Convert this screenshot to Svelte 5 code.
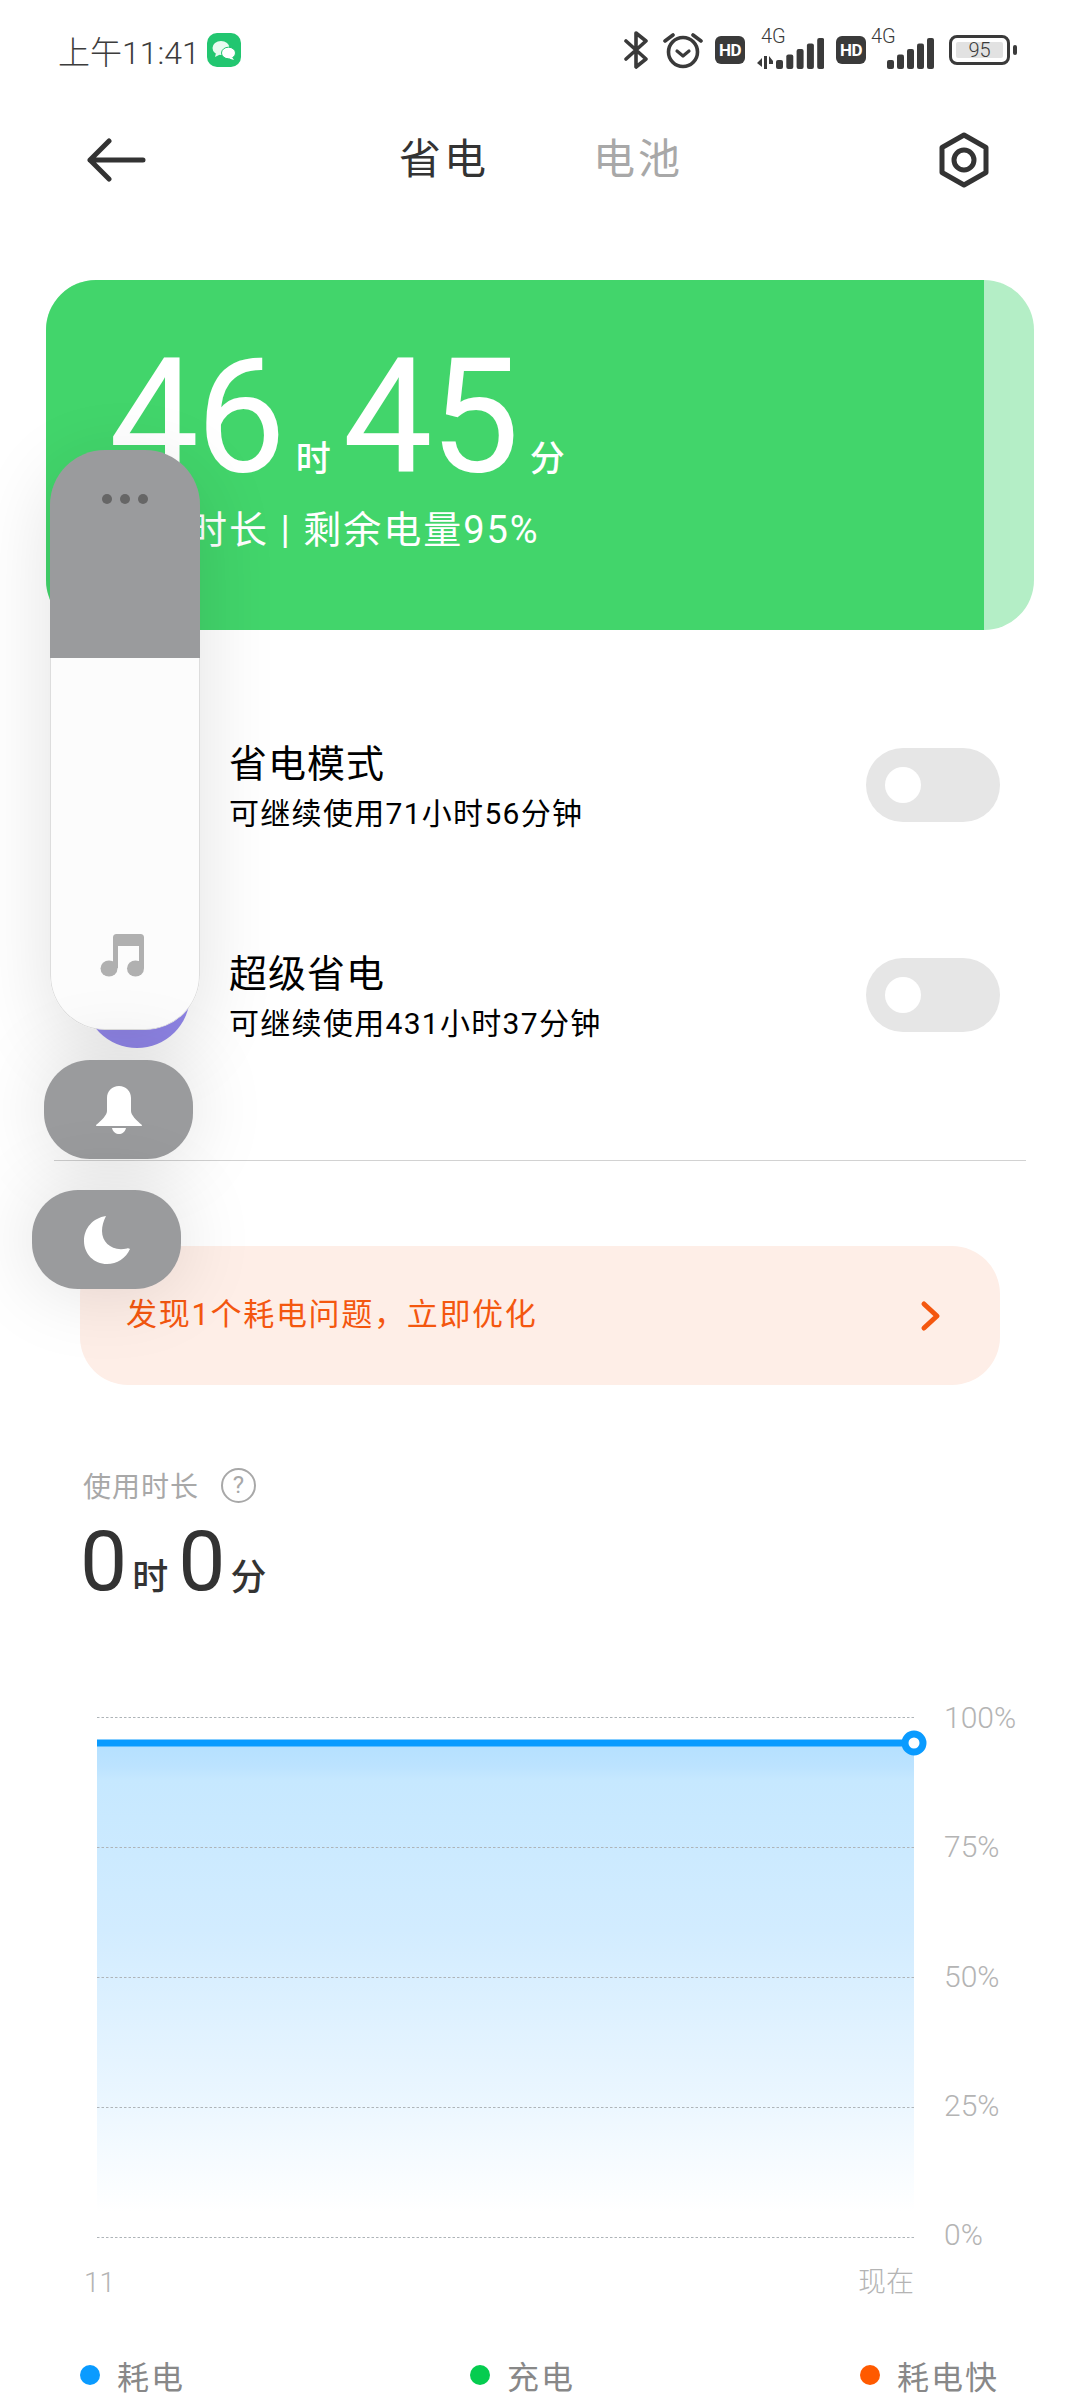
<script lang="ts">
	const modes = [
		{ title: '省电模式', sub: '可继续使用71小时56分钟' },
		{ title: '超级省电', sub: '可继续使用431小时37分钟' }
	];
	const gridLines = [17, 147, 277, 407, 537];
	const percents = ['100%', '75%', '50%', '25%', '0%'];
	const legend = [
		{ label: '耗电', color: '#0a9bff' },
		{ label: '充电', color: '#05cc4f' },
		{ label: '耗电快', color: '#ff5a00' }
	];
	const signalOne = [0, 1, 2, 3, 4];
</script>

<div class="page">
	<header class="status">
		<span class="time">上午11:41</span>
		<svg class="wechat" width="34" height="34" viewBox="0 0 34 34">
			<rect width="34" height="34" rx="10" fill="#22c670" />
			<ellipse cx="14" cy="15" rx="8.5" ry="7" fill="#e8fbf0" />
			<path d="M9 20l-1 4 5-2.500z" fill="#e8fbf0" />
			<ellipse cx="21.500" cy="20" rx="7" ry="5.800" fill="#fff" stroke="#22c670" stroke-width="1" />
			<path d="M25 24l2 3-5-1.500z" fill="#fff" />
		</svg>
		<div class="status-icons">
			<svg class="bt" width="24" height="38" viewBox="0 0 24 38" fill="none" stroke="#3a3a3a" stroke-width="3.600" stroke-linecap="round" stroke-linejoin="round">
				<path d="M2 10l20 18-10 8V2l10 8L2 28" />
			</svg>
			<svg class="alarm" width="40" height="38" viewBox="0 0 40 38" fill="none" stroke="#3a3a3a">
				<circle cx="20" cy="21" r="14.500" stroke-width="3.600" />
				<path d="M14 20l6 5 6-5" stroke-width="3.200" stroke-linecap="round" stroke-linejoin="round" />
				<path d="M2 10l8-6M38 10l-8-6" stroke-width="3.600" stroke-linecap="round" />
			</svg>
			<span class="hd first">HD</span>
			<div class="signal wide">
				<span class="net net-one">4G</span>
				<svg width="67" height="31" viewBox="0 0 67 31" fill="#3a3a3a">
					<path d="M0 25l5-5v9zM7 18h3v13H7zM12 18l4 5v3h-4z" />
					{#each signalOne as i}
						<rect x={19 + i * 10.300} y={22 - i * 5.500} width="7" height={9 + i * 5.500} rx="2" />
					{/each}
				</svg>
			</div>
			<span class="hd second">HD</span>
			<div class="signal narrow">
				<span class="net net-two">4G</span>
				<svg width="47" height="31" viewBox="0 0 47 31" fill="#3a3a3a">
					{#each signalOne as i}
						<rect x={i * 10} y={22 - i * 5.500} width="7" height={9 + i * 5.500} rx="2" />
					{/each}
				</svg>
			</div>
			<div class="battery"><span class="battery-fill">95</span></div>
			<span class="battery-nub"></span>
		</div>
	</header>

	<nav class="nav">
		<svg class="back" width="60" height="44" viewBox="0 0 60 44" fill="none" stroke="#333" stroke-width="5" stroke-linecap="round" stroke-linejoin="round">
			<path d="M3 22h53M22 3L3 22l19 19" />
		</svg>
		<div class="tabs">
			<span class="tab active">省电</span>
			<span class="tab">电池</span>
		</div>
		<svg class="settings" width="52" height="56" viewBox="0 0 52 56" fill="none" stroke="#333">
			<path d="M26 3l22 12.500v25L26 53 4 40.500v-25z" stroke-width="5" stroke-linejoin="round" />
			<circle cx="26" cy="28" r="10" stroke-width="5" />
		</svg>
	</nav>

	<section class="card">
		<div class="card-main">
			<div class="hero">
				<span class="num">46</span><span class="unit">时</span><span class="num second-num">45</span><span class="unit">分</span>
			</div>
			<div class="hero-sub">可用时长 | 剩余电量95%</div>
		</div>
	</section>

	<section class="modes">
		{#each modes as mode}
			<div class="mode">
				<span class="mode-icon"></span>
				<div class="mode-text">
					<div class="mode-title">{mode.title}</div>
					<div class="mode-sub">{mode.sub}</div>
				</div>
				<span class="toggle"><span class="knob"></span></span>
			</div>
		{/each}
	</section>

	<hr class="divider" />

	<div class="banner">
		<span class="banner-text">发现1个耗电问题，立即优化</span>
		<svg width="22" height="32" viewBox="0 0 22 32" fill="none" stroke="#f4570f" stroke-width="5" stroke-linecap="round" stroke-linejoin="round">
			<path d="M4 4l13 12L4 28" />
		</svg>
	</div>

	<section class="usage">
		<div class="usage-label">
			<span>使用时长</span>
			<span class="help">?</span>
		</div>
		<div class="usage-value">
			<span class="value-num">0</span><span class="value-unit">时</span><span class="value-num">0</span><span class="value-unit">分</span>
		</div>
	</section>

	<section class="chart">
		<div class="plot">
			<svg width="832" height="560" viewBox="0 0 832 560">
				<defs>
					<linearGradient id="area" x1="0" y1="0" x2="0" y2="1">
						<stop offset="0" stop-color="#b4e0ff" />
						<stop offset="0.05" stop-color="#bce3ff" />
						<stop offset="0.08" stop-color="#c6e8ff" />
						<stop offset="0.4" stop-color="#d2ecff" />
						<stop offset="0.75" stop-color="#eaf6ff" />
						<stop offset="1" stop-color="#ffffff" />
					</linearGradient>
				</defs>
				<rect x="0" y="43" width="817" height="469" fill="url(#area)" />
				{#each gridLines as y}
					<line x1="0" x2="817" y1={y + 0.5} y2={y + 0.5} stroke="#aeb4b8" stroke-width="1" stroke-dasharray="2.500 2" />
				{/each}
				<line x1="0" x2="817" y1="43" y2="43" stroke="#0a9bff" stroke-width="7" />
				<circle cx="817" cy="43" r="9" fill="#fff" stroke="#0a9bff" stroke-width="7" />
			</svg>
			<div class="axis-x">
				<span>11</span>
				<span>现在</span>
			</div>
		</div>
		<div class="axis-y">
			{#each percents as p}
				<span>{p}</span>
			{/each}
		</div>
	</section>

	<footer class="legend">
		{#each legend as item}
			<div class="legend-item">
				<span class="legend-dot" style="background: {item.color}"></span>
				<span>{item.label}</span>
			</div>
		{/each}
	</footer>

	<aside class="float">
		<div class="float-panel">
			<div class="panel-top">
				<span class="dot"></span><span class="dot"></span><span class="dot"></span>
			</div>
			<div class="panel-bottom">
				<svg width="44" height="44" viewBox="0 0 44 44" fill="#b0b0b0">
					<path d="M13 4.500A3.500 3.500 0 0 1 16.500 1h24A3.500 3.500 0 0 1 44 4.500V35h-5V13H18v22h-5z" />
					<ellipse cx="9" cy="35.500" rx="8.500" ry="8" />
					<ellipse cx="35.500" cy="35.500" rx="8.500" ry="8" />
				</svg>
			</div>
		</div>
		<div class="float-btn bell">
			<svg width="46" height="48" viewBox="0 0 46 48" fill="#fff">
				<path d="M23 0c-7 0-12 5-12 12v13c0 4-5 9-11 14 0 .6.300 1 1 1h44c.7 0 1-.4 1-1-6-5-11-10-11-14V12c0-7-5-12-12-12z" />
				<path d="M16 42h14c-1 4-4 6-7 6s-6-2-7-6z" />
			</svg>
		</div>
		<div class="float-btn moon">
			<svg width="46" height="48" viewBox="0 0 46 48" fill="#fff">
				<path d="M22 0C9 2 0 12 0 25c0 13 10 23 23 23 10 0 19-6 23-15-1-.8-2-1-3-.6C29 36 18 27 18 15c0-5 1.500-10 4-15z" />
			</svg>
		</div>
	</aside>
</div>

<style>
	:global(body) {
		margin: 0;
		background: #fff;
	}

	.page {
		position: relative;
		width: 1080px;
		height: 2400px;
		overflow: hidden;
		background: #fff;
		font-family: Roboto, 'Noto Sans CJK SC', sans-serif;
		color: #333;
	}

	.status {
		display: flex;
		align-items: center;
		height: 100px;
		padding: 0 63px 0 58px;
	}

	.time {
		font-size: 32px;
		font-weight: 300;
		color: #3c3c3c;
	}

	.wechat {
		margin-left: 7px;
	}

	.status-icons {
		display: flex;
		align-items: center;
		margin-left: auto;
		position: relative;
	}

	.alarm {
		margin-left: 15px;
	}

	.hd {
		display: flex;
		align-items: center;
		justify-content: center;
		width: 30px;
		height: 28px;
		border-radius: 6px;
		background: #3a3a3a;
		color: #fff;
		font-size: 17px;
		font-weight: 700;
		letter-spacing: -0.5px;
	}

	.hd.first {
		margin-left: 12px;
	}

	.hd.second {
		margin-left: 12px;
	}

	.signal {
		position: relative;
		height: 38px;
		display: flex;
		align-items: flex-end;
	}

	.signal.wide {
		margin-left: 12px;
	}

	.signal.narrow {
		margin-left: 21px;
	}

	.net {
		position: absolute;
		top: -5px;
		font-size: 20px;
		font-weight: 300;
		line-height: 20px;
		color: #3a3a3a;
	}

	.net-one {
		left: 4px;
	}

	.net-two {
		left: -16px;
	}

	.battery {
		box-sizing: border-box;
		width: 61px;
		height: 30px;
		margin-left: 15px;
		padding: 4px;
		border: 3px solid #3a3a3a;
		border-radius: 8px;
	}

	.battery-fill {
		display: block;
		height: 16px;
		border-radius: 2px;
		background: #e2e2e2;
		font-size: 20px;
		font-weight: 300;
		line-height: 16px;
		text-align: center;
		color: #3a3a3a;
	}

	.battery-nub {
		width: 4px;
		height: 10px;
		margin-left: 3px;
		border-radius: 2px;
		background: #3a3a3a;
	}

	.nav {
		display: grid;
		grid-template-columns: 1fr auto 1fr;
		align-items: center;
		height: 120px;
		padding: 0 90px 0 87px;
	}

	.settings {
		justify-self: end;
	}

	.tabs {
		display: flex;
		gap: 104px;
		margin: 0 0 10px 5px;
	}

	.tab {
		font-size: 42px;
		letter-spacing: 3px;
		color: #a8a8a8;
	}

	.tab.active {
		color: #333;
	}

	.card {
		height: 350px;
		margin: 60px 46px 0;
		border-radius: 50px;
		overflow: hidden;
		background: #b4eec6;
	}

	.card-main {
		box-sizing: border-box;
		width: 938px;
		height: 100%;
		padding: 57px 0 0 63px;
		background: #42d56b;
		color: #fff;
	}

	.hero {
		display: flex;
		align-items: baseline;
		height: 160px;
	}

	.num {
		font-size: 160px;
		font-weight: 400;
		line-height: 160px;
		letter-spacing: -3px;
	}

	.second-num {
		margin-left: 12px;
	}

	.unit {
		margin-left: 13px;
		font-size: 35px;
		font-weight: 500;
		line-height: 35px;
	}

	.hero-sub {
		margin-top: 2px;
		font-size: 38px;
		font-weight: 400;
		letter-spacing: 2px;
	}

	.modes {
		margin-top: 50px;
	}

	.mode {
		display: flex;
		align-items: center;
		height: 210px;
		padding: 0 80px 0 84px;
		color: #000;
	}

	.mode-icon {
		flex-shrink: 0;
		width: 106px;
		height: 106px;
		margin-right: 39px;
		border-radius: 50%;
		background: #9489ee;
	}

	.mode-text {
		flex: 1;
		padding-top: 4px;
	}

	.mode-title {
		font-size: 38px;
		line-height: 50px;
		letter-spacing: 1px;
	}

	.mode-sub {
		margin-top: 3px;
		font-size: 30px;
		line-height: 44px;
		letter-spacing: 1.300px;
	}

	.toggle {
		display: flex;
		align-items: center;
		width: 134px;
		height: 74px;
		padding-left: 19px;
		box-sizing: border-box;
		border-radius: 37px;
		background: #e6e6e6;
	}

	.knob {
		width: 36px;
		height: 36px;
		border-radius: 50%;
		background: #fff;
	}

	.divider {
		height: 1px;
		margin: 60px 54px 0;
		border: 0;
		background: #d2d2d2;
	}

	.banner {
		display: flex;
		align-items: center;
		justify-content: space-between;
		height: 139px;
		margin: 85px 80px 0;
		padding: 0 58px 0 46px;
		border-radius: 48px;
		background: #feeee7;
		color: #f4570f;
	}

	.banner-text {
		margin-bottom: 8px;
		font-size: 31px;
		letter-spacing: 1.700px;
	}

	.usage {
		margin: 82px 0 0 80px;
	}

	.usage-label {
		display: flex;
		align-items: center;
		gap: 22px;
		height: 36px;
		margin-left: 3px;
		font-size: 28px;
		letter-spacing: 1px;
		color: #a8a8a8;
	}

	.help {
		display: flex;
		align-items: center;
		justify-content: center;
		box-sizing: border-box;
		width: 35px;
		height: 35px;
		border: 2.500px solid #a8a8a8;
		border-radius: 50%;
		font-size: 24px;
		letter-spacing: 0;
	}

	.usage-value {
		display: flex;
		align-items: baseline;
		height: 84px;
		margin-top: 17px;
	}

	.value-num {
		font-size: 84px;
		font-weight: 400;
		line-height: 84px;
		letter-spacing: -3px;
	}

	.value-unit {
		margin: 0 10px 0 8px;
		font-size: 36px;
		font-weight: 500;
		line-height: 36px;
	}

	.chart {
		display: flex;
		margin: 96px 0 0 97px;
	}

	.plot {
		width: 832px;
		height: 600px;
	}

	.plot svg {
		display: block;
	}

	.axis-x {
		display: flex;
		align-items: center;
		justify-content: space-between;
		width: 830px;
		height: 40px;
		margin: 3px 0 0 -13px;
		font-size: 28px;
		line-height: 40px;
		font-weight: 300;
		color: #b4b4b4;
	}

	.axis-y {
		display: flex;
		flex-direction: column;
		justify-content: space-between;
		height: 552px;
		margin-left: 15px;
		font-size: 30px;
		font-weight: 300;
		color: #b4b4b4;
	}

	.legend {
		display: grid;
		grid-template-columns: 390px 390px auto;
		margin: 52px 0 0 80px;
		font-size: 32px;
		letter-spacing: 2px;
		color: #888;
	}

	.legend-item {
		display: flex;
		align-items: center;
		gap: 17px;
	}

	.legend-dot {
		width: 20px;
		height: 20px;
		border-radius: 50%;
	}

	.float {
		position: absolute;
		inset: 0;
		pointer-events: none;
	}

	.float-panel {
		position: absolute;
		left: 50px;
		top: 450px;
		display: flex;
		flex-direction: column;
		width: 150px;
		height: 580px;
		border-radius: 55px;
		overflow: hidden;
		box-shadow: 0 20px 80px rgba(0, 0, 0, 0.12);
	}

	.panel-top {
		display: flex;
		justify-content: center;
		gap: 8px;
		height: 208px;
		padding-top: 44px;
		box-sizing: border-box;
		background: #9a9b9d;
	}

	.dot {
		width: 10px;
		height: 10px;
		border-radius: 50%;
		background: #666;
	}

	.panel-bottom {
		flex: 1;
		display: flex;
		align-items: flex-end;
		justify-content: center;
		padding: 0 6px 52px 0;
		box-sizing: border-box;
		background: #fcfcfc;
		border: 1px solid #ddd;
		border-top: 0;
		border-radius: 0 0 55px 55px;
	}

	.float-btn {
		position: absolute;
		display: flex;
		align-items: center;
		justify-content: center;
		width: 149px;
		height: 99px;
		border-radius: 46px;
		background: #9a9b9d;
		box-shadow: 0 0 80px rgba(0, 0, 0, 0.13);
	}

	.bell {
		left: 44px;
		top: 1060px;
	}

	.moon {
		left: 32px;
		top: 1190px;
	}
</style>
